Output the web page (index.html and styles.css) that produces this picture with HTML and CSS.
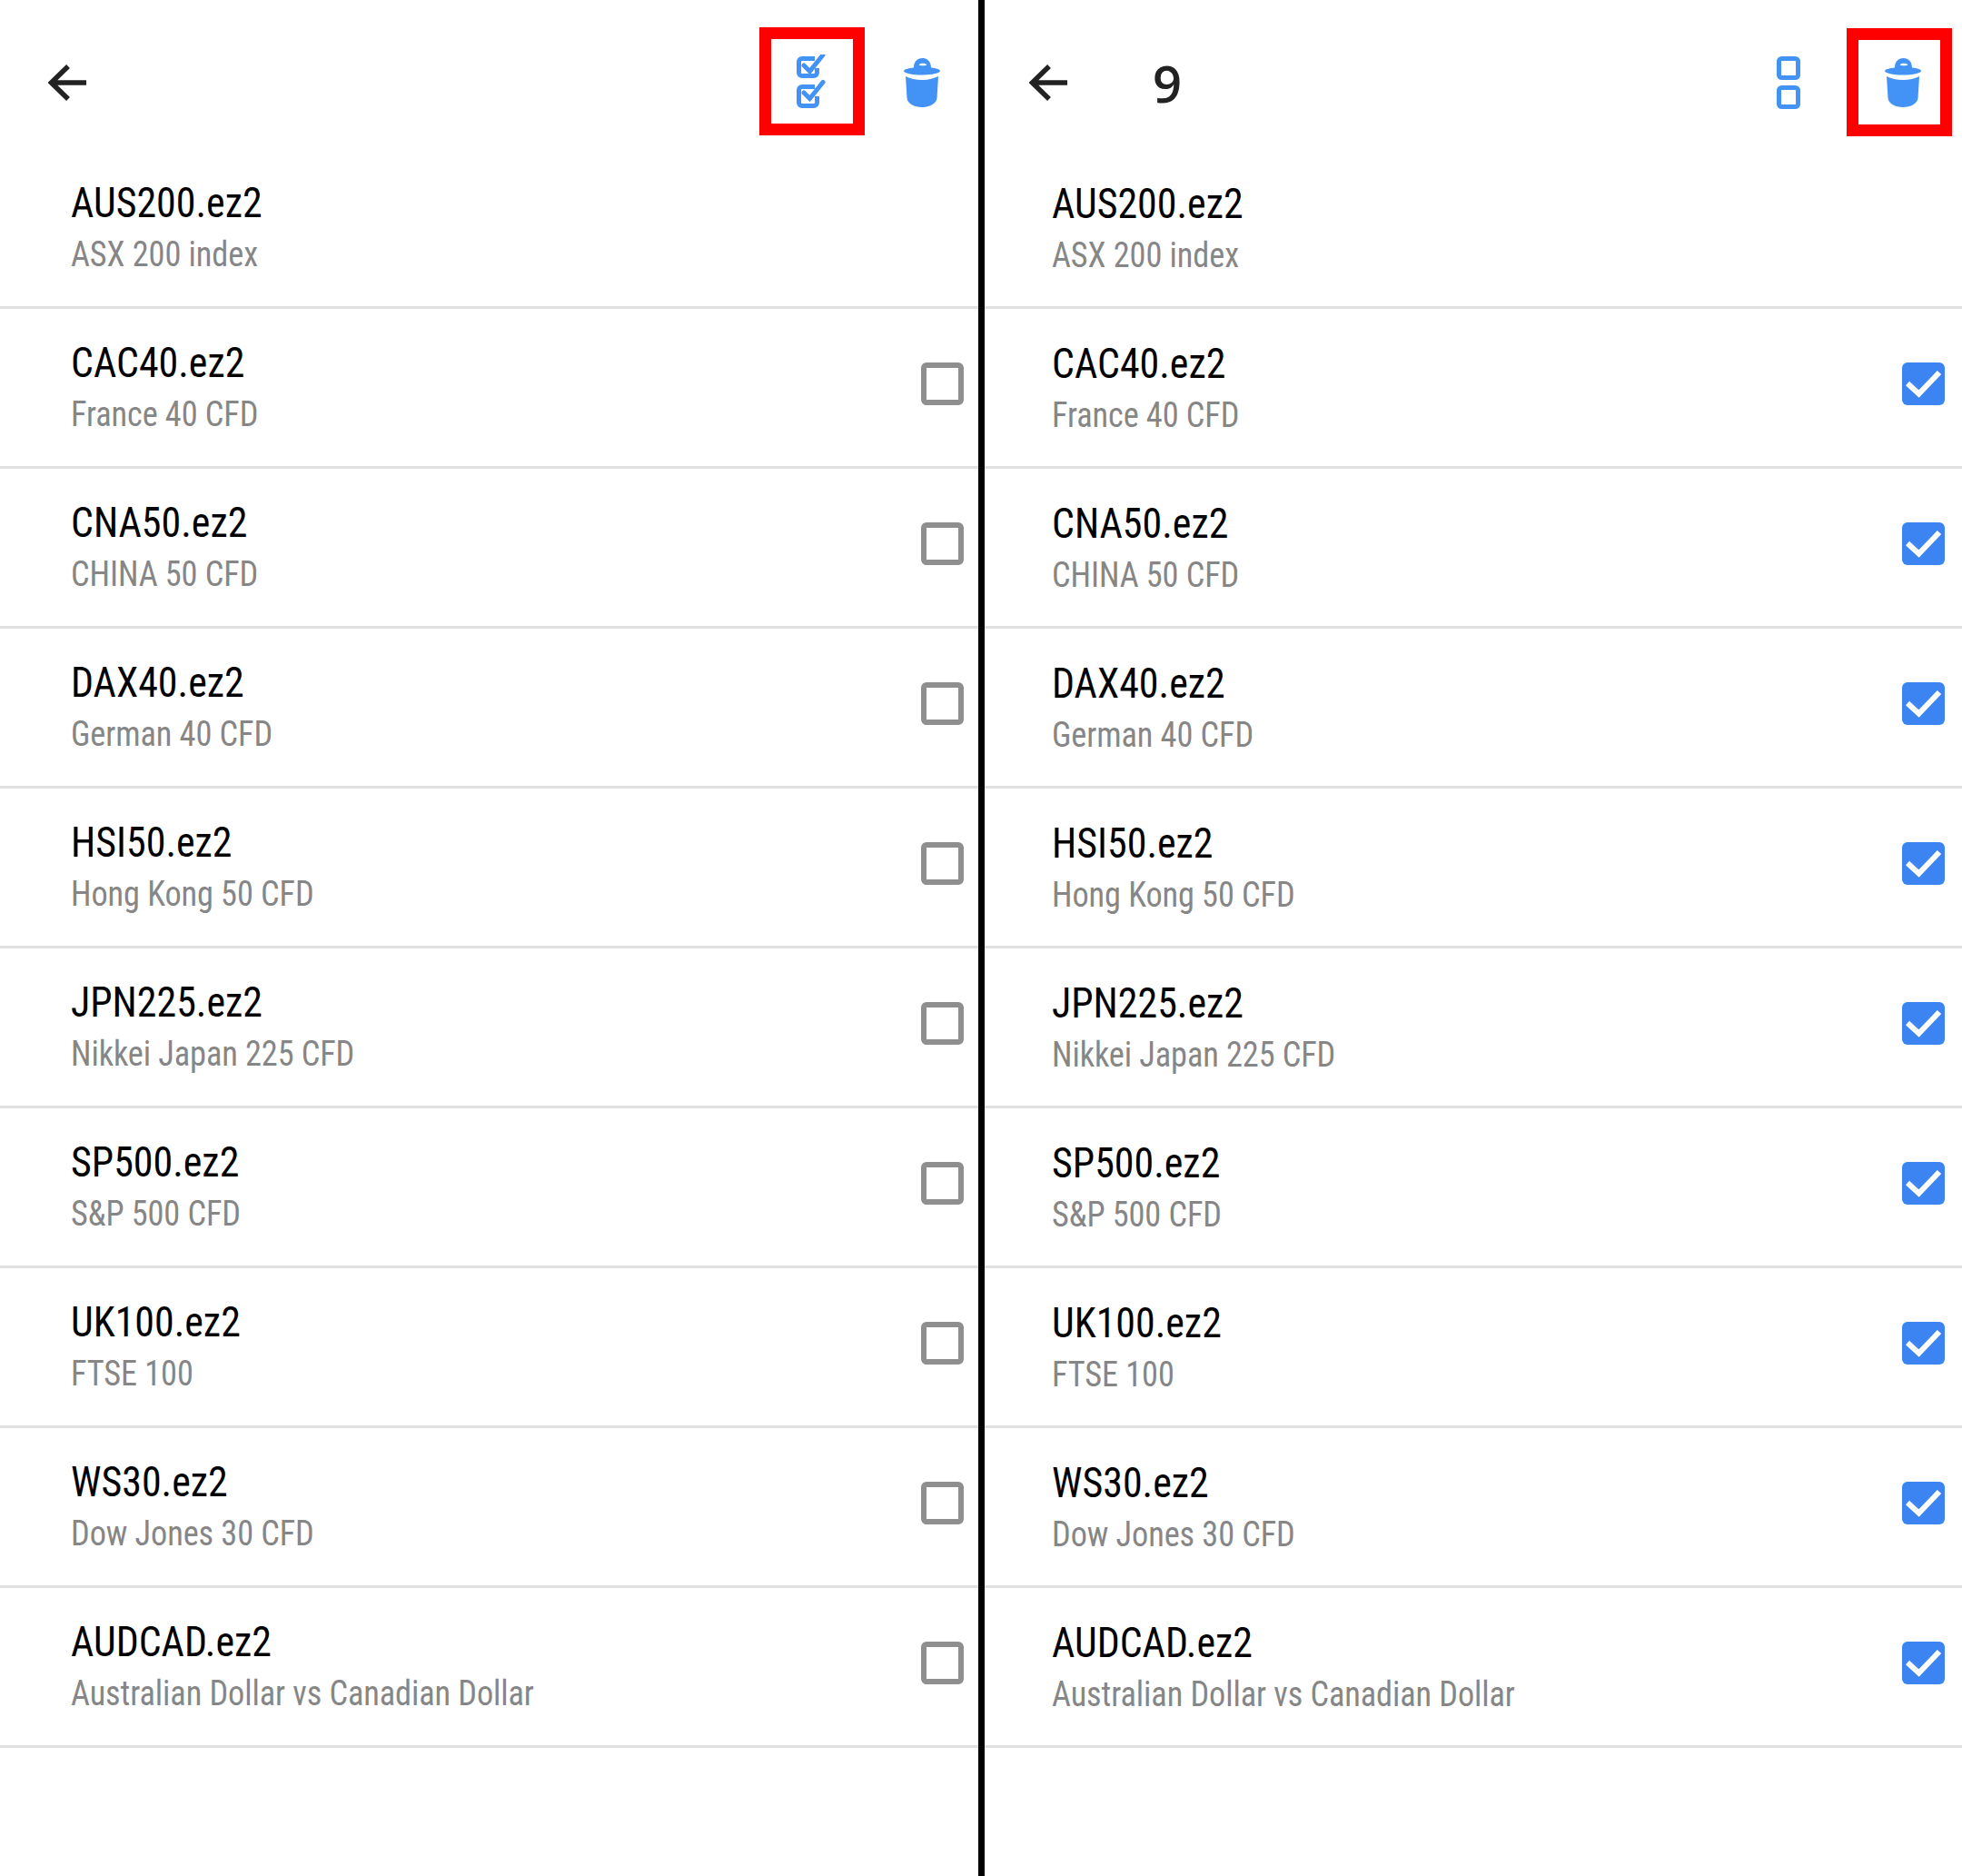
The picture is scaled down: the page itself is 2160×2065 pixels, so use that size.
FILE: index.html
```html
<!DOCTYPE html>
<html lang="en">
<head>
    <meta charset="UTF-8">
    <title>Symbols</title>
    <link rel="stylesheet" href="styles.css">
</head>
<body>
    <div class="screens">
        <section class="panel">
            <header class="toolbar">
                <svg class="back" viewBox="0 0 42 42"><path d="M42 21H4M22 3 3.500 21l18.500 18"/></svg>
                <span class="count"></span>
                <button class="tool tool-multi">
                    <svg viewBox="0 1 34 62"><path d="M22 5.500H8a3.500 3.500 0 0 0-3.500 3.500v12a3.500 3.500 0 0 0 3.500 3.500h13a3.500 3.500 0 0 0 3.500-3.500v-5"/><path class="check" d="M10 13l6.500 6.500L31 1.500"/><path d="M22 36.500H8a3.500 3.500 0 0 0-3.500 3.500v14a3.500 3.500 0 0 0 3.500 3.500h13a3.500 3.500 0 0 0 3.500-3.500v-7"/><path class="check" d="M10 43l6.500 6.500L31 31.500"/></svg>
                </button>
                <button class="tool tool-trash">
                    <svg viewBox="0 0 40 54"><path class="solid" d="M11 10.500C11 4 15 0 20.500 0S30 4 30 10.500C36 11 40 12.500 40 14c0 2.500-9 4.500-20 4.500S0 16.500 0 14c0-1.500 5-3 11-3.500zM16.500 7.500c1.500 1 7.500 1 9 0-1.500-2.500-7.500-2.500-9 0z"/><path class="solid" d="M2 20c5 2.500 11 4 18 4s13-1.500 18-4l-1.500 24c-.5 6-8 10-16.500 10S4 50 3.500 44z"/></svg>
                </button>
                <div class="highlight highlight-left"></div>
            </header>
            <ul class="list" id="listLeft"></ul>
        </section>
        <div class="split"></div>
        <section class="panel panel-right">
            <header class="toolbar">
                <svg class="back" viewBox="0 0 42 42"><path d="M42 21H4M22 3 3.500 21l18.500 18"/></svg>
                <span class="count">9</span>
                <button class="tool tool-multi">
                    <svg viewBox="0 0 34 62"><rect x="4.500" y="4.500" width="21" height="21" rx="3"/><rect x="4.500" y="36.500" width="21" height="21" rx="3"/></svg>
                </button>
                <button class="tool tool-trash">
                    <svg viewBox="0 0 40 54"><path class="solid" d="M11 10.500C11 4 15 0 20.500 0S30 4 30 10.500C36 11 40 12.500 40 14c0 2.500-9 4.500-20 4.500S0 16.500 0 14c0-1.500 5-3 11-3.500zM16.500 7.500c1.500 1 7.500 1 9 0-1.500-2.500-7.500-2.500-9 0z"/><path class="solid" d="M2 20c5 2.500 11 4 18 4s13-1.500 18-4l-1.500 24c-.5 6-8 10-16.500 10S4 50 3.500 44z"/></svg>
                </button>
                <div class="highlight highlight-right"></div>
            </header>
            <ul class="list" id="listRight"></ul>
        </section>
    </div>

    <script>
        const symbols = [
            ['AUS200.ez2', 'ASX 200 index'],
            ['CAC40.ez2', 'France 40 CFD'],
            ['CNA50.ez2', 'CHINA 50 CFD'],
            ['DAX40.ez2', 'German 40 CFD'],
            ['HSI50.ez2', 'Hong Kong 50 CFD'],
            ['JPN225.ez2', 'Nikkei Japan 225 CFD'],
            ['SP500.ez2', 'S&P 500 CFD'],
            ['UK100.ez2', 'FTSE 100'],
            ['WS30.ez2', 'Dow Jones 30 CFD'],
            ['AUDCAD.ez2', 'Australian Dollar vs Canadian Dollar']
        ];
        const tick = '<svg viewBox="0 0 47 47"><path d="M6 23l12.500 11.500L41 11"/></svg>';

        function fillList(listId, boxClass, boxInner) {
            const list = document.getElementById(listId);
            symbols.forEach(function (symbol, i) {
                const row = document.createElement('li');
                row.className = 'row';
                // first symbol is the current one, it has no checkbox
                const box = i === 0 ? '' : `<span class="box ${boxClass}">${boxInner}</span>`;
                row.innerHTML = `<div class="names"><div class="name">${symbol[0]}</div><div class="desc">${symbol[1].replace('&', '&amp;')}</div></div>${box}`;
                list.appendChild(row);
            });
        }

        fillList('listLeft', '', '');
        fillList('listRight', 'checked', tick);
    </script>
</body>
</html>
```

FILE: styles.css
```css
* {
    box-sizing: border-box;
}
body {
    margin: 0;
    background-color: #fff;
    font-family: "Roboto", sans-serif;
    font-stretch: 75%;
}
.screens {
    display: flex;
    height: 2065px;
    overflow: hidden;
}
.panel {
    width: 1077px;
    flex: none;
}
.panel-right {
    width: 1076px;
}
.split {
    width: 7px;
    flex: none;
    background-color: #000;
}
.toolbar {
    position: relative;
    display: flex;
    align-items: center;
    height: 164px;
    padding-top: 17px;
    padding-left: 53px;
}
.panel-right .toolbar {
    padding-left: 49px;
}
.back {
    width: 42px;
    height: 42px;
    flex: none;
    fill: none;
    stroke: #222;
    stroke-width: 5.500;
}
.count {
    margin-left: 94px;
    font-family: "Open Sans", sans-serif;
    font-stretch: 100%;
    font-size: 56px;
    font-weight: 600;
    color: #222;
}
.tool {
    padding: 0;
    border: none;
    background: none;
    flex: none;
    display: flex;
}
.tool svg {
    display: block;
    fill: none;
    stroke: #4293f5;
    stroke-width: 5;
    stroke-linejoin: round;
}
.tool .check {
    stroke-linecap: round;
    stroke-linejoin: miter;
}
.tool-multi {
    margin-left: auto;
}
.tool-multi svg {
    width: 34px;
    height: 62px;
}
.tool-trash {
    margin-left: 86px;
    margin-right: 42px;
}
.panel-right .tool-trash {
    margin-left: 87px;
    margin-right: 45px;
}
.tool-trash svg {
    width: 40px;
    height: 54px;
}
.tool .solid {
    fill: #4293f5;
    fill-rule: evenodd;
    stroke: none;
}
.highlight {
    position: absolute;
    top: 30px;
    width: 116px;
    height: 119px;
    border: 13px solid #f00;
}
.highlight-left {
    left: 836px;
}
.highlight-right {
    left: 949px;
    top: 31px;
}
.list {
    list-style: none;
    margin: 0;
    padding: 0;
}
.row {
    display: flex;
    align-items: flex-start;
    justify-content: space-between;
    height: 176px;
    padding: 32px 16px 0 78px;
    border-bottom: 3px solid #e0e0e0;
}
.panel-right .row {
    padding: 33px 19px 0 74px;
}
.names {
    /* the screenshot is squeezed a bit sideways */
    transform: scaleX(0.955);
    transform-origin: left;
}
.name {
    font-size: 46px;
    line-height: 54px;
    color: #000;
}
.desc {
    margin-top: 4px;
    font-size: 38px;
    line-height: 52px;
    letter-spacing: -0.08px;
    color: #868686;
}
.box {
    width: 47px;
    height: 47px;
    margin-top: 27px;
    border: 6px solid #8f8f8f;
    border-radius: 6px;
}
.panel-right .box {
    margin-top: 26px;
}
.box.checked {
    border: none;
    background-color: #3d84f3;
}
.box svg {
    display: block;
    fill: none;
    stroke: #fff;
    stroke-width: 6;
}
```
